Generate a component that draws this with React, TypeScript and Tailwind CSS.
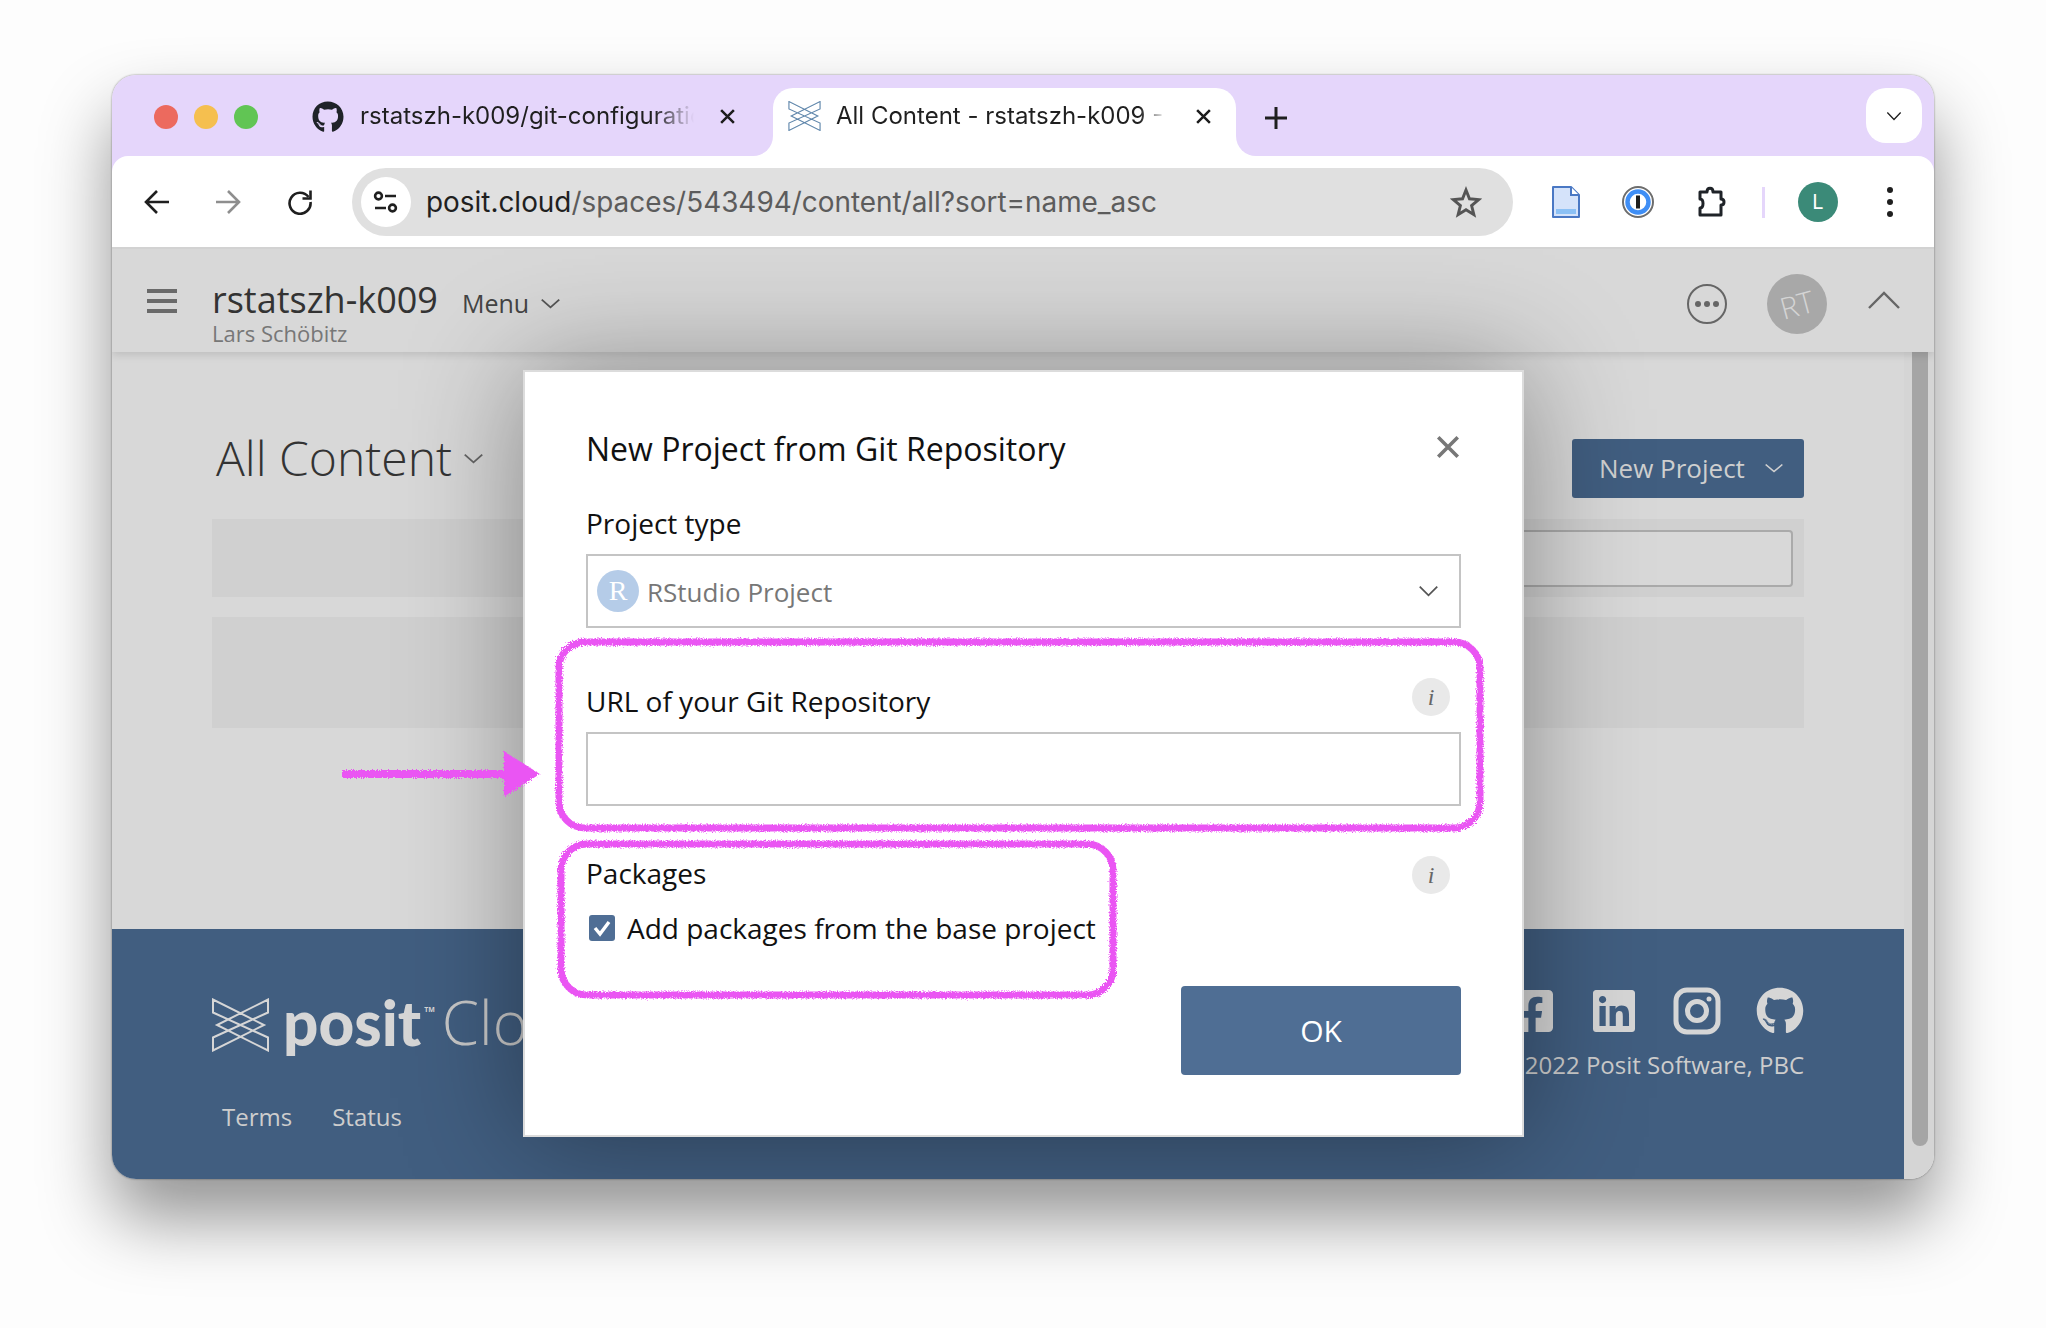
import React from "react";
import { FaGithub, FaFacebookSquare, FaLinkedin } from "react-icons/fa";

const PositMark = ({ className }: { className: string }) => (
  <svg viewBox="-1 -1 57 53" className={className} fill="none" stroke="currentColor" strokeWidth="2">
    <path d="M0 13V0L51 25.5L0 51V38L55 13V0L4 25.5L55 51V38L0 13Z" strokeLinejoin="miter" />
  </svg>
);

const Chevron = ({ className }: { className: string }) => (
  <svg viewBox="0 0 24 14" className={className} fill="none" stroke="currentColor" strokeWidth="2" preserveAspectRatio="none">
    <path d="M2 2L12 12L22 2" />
  </svg>
);

const Cross = ({ className, weight = "2.4" }: { className: string; weight?: string }) => (
  <svg viewBox="0 0 16 16" className={className} fill="none" stroke="currentColor" strokeWidth={weight}>
    <path d="M2 2L14 14M14 2L2 14" />
  </svg>
);

const Info = () => (
  <div className="flex h-[38px] w-[38px] items-center justify-center rounded-full bg-[#e9e9e9] text-[24px] italic leading-none text-[#666] [font-family:'Liberation_Serif',serif]">
    i
  </div>
);

const Annotations = () => (
  <svg className="pointer-events-none absolute left-0 top-0 z-20" width="2046" height="1328" fill="none">
    <defs>
      <filter id="rough" x="-5%" y="-5%" width="110%" height="110%">
        <feTurbulence type="fractalNoise" baseFrequency="0.8" numOctaves="2" seed="4" />
        <feDisplacementMap in="SourceGraphic" scale="5" />
      </filter>
    </defs>
    <g filter="url(#rough)" stroke="#ea55f3">
      <rect x="559" y="642" width="921" height="186" rx="26" strokeWidth="7" />
      <rect x="561" y="844" width="552" height="151" rx="26" strokeWidth="7" />
      <path d="M342 774H510" strokeWidth="8" />
      <path d="M505 753L538 774L505 795Z" fill="#ea55f3" strokeWidth="2" />
    </g>
  </svg>
);

const ChromeBar = () => (
  <div className="bg-[#e5d6fb]">
    <div className="flex h-[81px] items-end pr-[12px] [font-family:Inter,sans-serif]">
      <div className="flex h-[68px] w-[661px] items-start pt-[17px]">
        <div className="ml-[42px] flex h-[24px] gap-[16px]">
          <div className="h-[24px] w-[24px] rounded-full bg-[#ec6a5e]" />
          <div className="h-[24px] w-[24px] rounded-full bg-[#f5bf4f]" />
          <div className="h-[24px] w-[24px] rounded-full bg-[#61c554]" />
        </div>
        <FaGithub className="ml-[54px] mt-[-4px] h-[32px] w-[32px] shrink-0 text-[#1f2328]" />
        <div className="ml-[16px] mt-[-7px] w-[334px] overflow-hidden whitespace-nowrap text-[24px] leading-[36px] text-[#1f1f1f] [mask-image:linear-gradient(to_right,black_88%,transparent)]">
          rstatszh-k009/git-configuration
        </div>
        <Cross className="ml-[25px] mt-[3px] h-[17px] w-[17px] shrink-0 text-[#1f1f1f]" />
      </div>
      <div className="relative flex h-[68px] w-[463px] items-start rounded-t-[20px] bg-white pt-[10px]">
        <div className="absolute bottom-0 left-[-20px] h-[20px] w-[20px] bg-white">
          <div className="h-full w-full rounded-br-[20px] bg-[#e5d6fb]" />
        </div>
        <div className="absolute bottom-0 right-[-20px] h-[20px] w-[20px] bg-white">
          <div className="h-full w-full rounded-bl-[20px] bg-[#e5d6fb]" />
        </div>
        <PositMark className="ml-[15px] mt-[3px] h-[30px] w-[33px] shrink-0 text-[#5f86ab]" />
        <div className="ml-[15px] w-[330px] overflow-hidden whitespace-nowrap text-[24px] leading-[36px] text-[#1f1f1f] [mask-image:linear-gradient(to_right,black_92%,transparent)]">
          All Content - rstatszh-k009 - Posit Cloud
        </div>
        <Cross className="ml-[29px] mt-[10px] h-[17px] w-[17px] shrink-0 text-[#1f1f1f]" />
      </div>
      <div className="mb-[27px] ml-[29px] text-[0px]">
        <svg viewBox="0 0 22 22" className="h-[22px] w-[22px] text-[#1f1f1f]" fill="none" stroke="currentColor" strokeWidth="3">
          <path d="M11 0V22M0 11H22" />
        </svg>
      </div>
      <div className="mb-[13px] ml-auto flex h-[55px] w-[56px] items-center justify-center rounded-[20px] bg-white">
        <Chevron className="h-[10px] w-[16px] text-[#1f1f1f]" />
      </div>
    </div>
    <div className="flex h-[93px] items-center rounded-t-[16px] border-b-2 border-[#d2d2d2] bg-white pb-[1px] pt-[2px] [font-family:Inter,sans-serif]">
      <svg viewBox="0 0 26 26" className="ml-[32px] h-[26px] w-[26px] text-[#1f1f1f]" fill="none" stroke="currentColor" strokeWidth="2.6">
        <path d="M25 13H3M13 2L2 13L13 24" />
      </svg>
      <svg viewBox="0 0 26 26" className="ml-[45px] h-[26px] w-[26px] text-[#8e8e8e]" fill="none" stroke="currentColor" strokeWidth="2.6">
        <path d="M1 13H23M13 2L24 13L13 24" />
      </svg>
      <svg viewBox="0 0 26 26" className="ml-[46px] h-[26px] w-[26px] text-[#1f1f1f]" fill="none" stroke="currentColor" strokeWidth="2.6">
        <path d="M21.5 8A10.5 10.5 0 1 0 23.5 13" />
        <path d="M23.5 1.5V9.5H15.5" />
      </svg>
      <div className="ml-[39px] flex h-[68px] w-[1161px] items-center rounded-full bg-[#e0e0e0] pl-[9px] pr-[31px]">
        <div className="flex h-[50px] w-[50px] items-center justify-center rounded-full bg-white">
          <svg viewBox="0 0 26 22" className="h-[22px] w-[26px] text-[#1f1f1f]" fill="none" stroke="currentColor" strokeWidth="2.6">
            <circle cx="5.5" cy="5" r="3.4" />
            <path d="M12 5H23M2 17H13" />
            <circle cx="19.5" cy="17" r="3.4" />
          </svg>
        </div>
        <div className="ml-[15px] whitespace-nowrap text-[27.9px] leading-[36px] text-[#5c5c5c]">
          <span className="text-[#1f1f1f]">posit.cloud</span>/spaces/543494/content/all?sort=name_asc
        </div>
        <svg viewBox="0 0 24 24" className="ml-auto h-[32px] w-[32px] text-[#555]" fill="none" stroke="currentColor" strokeWidth="2.2" strokeLinejoin="miter">
          <path d="M12 3L14.6 9.6L21.5 10.2L16.2 14.7L17.9 21.5L12 17.8L6.1 21.5L7.8 14.7L2.5 10.2L9.4 9.6Z" />
        </svg>
      </div>
      <svg viewBox="0 0 28 32" className="ml-[39px] h-[32px] w-[28px]">
        <path d="M1 1H19L27 9V31H1Z" fill="#d5e3fa" stroke="#4a78c4" strokeWidth="2" strokeLinejoin="round" />
        <path d="M19 1V9H27" fill="#fff" stroke="#4a78c4" strokeWidth="2" />
        <rect x="4" y="23" width="20" height="5" fill="#8cc1f5" />
      </svg>
      <svg viewBox="0 0 32 32" className="ml-[42px] h-[32px] w-[32px]">
        <circle cx="16" cy="16" r="15" fill="#fff" stroke="#6d6d6d" strokeWidth="2" />
        <circle cx="16" cy="16" r="10.5" fill="#fff" stroke="#3f8ef5" strokeWidth="4.5" />
        <rect x="14" y="9.5" width="4" height="13" fill="#1f1f1f" />
      </svg>
      <svg viewBox="0 0 32 32" className="ml-[40px] h-[32px] w-[32px] text-[#1f2328]" fill="none" stroke="currentColor" strokeWidth="3" strokeLinejoin="round">
        <path d="M6 6H13C13 1 19 1 19 6H27V13C31 13 31 19 27 19V29H6V22C10 22 10 13 6 13Z" />
      </svg>
      <div className="ml-[36px] h-[31px] w-[3px] bg-[#e5d6fb]" />
      <div className="ml-[33px] flex h-[40px] w-[40px] items-center justify-center rounded-full bg-[#3b8a78] text-[20px] text-white">L</div>
      <div className="ml-[49px] flex flex-col gap-[6px]">
        <div className="h-[6px] w-[6px] rounded-full bg-[#1f1f1f]" />
        <div className="h-[6px] w-[6px] rounded-full bg-[#1f1f1f]" />
        <div className="h-[6px] w-[6px] rounded-full bg-[#1f1f1f]" />
      </div>
    </div>
  </div>
);

const AppHeader = () => (
  <div className="relative z-[1] flex h-[103px] shrink-0 items-start bg-[#d8d8d8] shadow-[0_3px_8px_rgba(0,0,0,0.12)]">
    <div className="ml-[35px] mt-[40px] flex w-[30px] flex-col gap-[6px]">
      <div className="h-[4px] bg-[#6a6a6a]" />
      <div className="h-[4px] bg-[#6a6a6a]" />
      <div className="h-[4px] bg-[#6a6a6a]" />
    </div>
    <div className="ml-[35px] flex flex-col">
      <div className="mt-[30px] flex h-[41px] items-baseline">
        <span className="text-[36px] leading-[41px] text-[#333]">rstatszh-k009</span>
        <span className="ml-[24px] text-[25px] leading-[41px] text-[#444]">Menu</span>
        <Chevron className="ml-[11px] mt-[7px] h-[11px] w-[21px] self-center text-[#555]" />
      </div>
      <div className="text-[22px] leading-[26px] text-[#777]">Lars Schöbitz</div>
    </div>
    <div className="ml-auto mr-[34px] mt-[25px] flex items-center">
      <div className="flex h-[40px] w-[40px] items-center justify-center gap-[3px] rounded-full border-2 border-[#666]">
        <div className="h-[6px] w-[6px] rounded-full bg-[#666]" />
        <div className="h-[6px] w-[6px] rounded-full bg-[#666]" />
        <div className="h-[6px] w-[6px] rounded-full bg-[#666]" />
      </div>
      <div className="ml-[40px] flex h-[60px] w-[60px] items-center justify-center rounded-full bg-[#a8a8a8]">
        <span className="-rotate-[15deg] text-[30px] font-light text-[#d4d4d4]">RT</span>
      </div>
      <svg viewBox="0 0 32 18" className="mb-[8px] ml-[41px] h-[18px] w-[32px] text-[#666]" fill="none" stroke="currentColor" strokeWidth="2.4">
        <path d="M1 17L16 2L31 17" />
      </svg>
    </div>
  </div>
);

const Content = () => (
  <div className="flex min-w-0 flex-1 flex-col">
    <div className="flex-1 bg-[#d8d8d8] px-[100px] pt-[76px]">
      <div className="flex h-[60px] items-center justify-between">
        <div className="flex items-center pl-[4px]">
          <span className="text-[48px] font-light leading-[60px] text-[#333]">All Content</span>
          <Chevron className="ml-[11px] h-[11px] w-[21px] text-[#666]" />
        </div>
        <div className="mt-[20px] flex h-[59px] w-[232px] items-center justify-between rounded-[3px] bg-[#415e80] pl-[27px] pr-[20px] text-[26px] text-[#cfcfcf]">
          New Project
          <Chevron className="h-[10px] w-[20px]" />
        </div>
      </div>
      <div className="mt-[31px] flex h-[78px] items-center justify-end bg-[#d0d0d0] pr-[11px]">
        <div className="h-[57px] w-[400px] rounded-[4px] border-2 border-[#aaa] bg-[#d8d8d8]" />
      </div>
      <div className="mt-[20px] h-[111px] bg-[#d0d0d0]" />
    </div>
    <div className="flex h-[250px] justify-between bg-[#415e80] px-[100px] pt-[58px]">
      <div className="text-[#d6d6d6]">
        <div className="flex items-center">
          <PositMark className="mt-[5px] h-[54px] w-[57px]" />
          <span className="ml-[14px] text-[62px] font-black leading-[70px] [font-family:Lato,sans-serif]">posit</span>
          <span className="ml-[3px] mt-[-24px] text-[7px] font-bold">TM</span>
          <span className="ml-[7px] text-[60px] font-light leading-[70px] text-[#c8c8c8]">Cloud</span>
        </div>
        <div className="ml-[10px] mt-[44px] flex gap-[40px] text-[24px] leading-[32px] text-[#cdcdcd]">
          <span>Terms</span>
          <span>Status</span>
        </div>
      </div>
      <div className="flex flex-col items-end text-[#d6d6d6]">
        <div className="flex gap-[36px]">
          <FaFacebookSquare className="h-[48px] w-[46px]" />
          <FaLinkedin className="h-[48px] w-[46px]" />
          <svg viewBox="0 0 48 48" className="mr-[-1px] h-[48px] w-[48px]" fill="none" stroke="currentColor" strokeWidth="5">
            <rect x="3" y="3" width="42" height="42" rx="11" />
            <circle cx="24" cy="24" r="9.5" />
            <circle cx="36" cy="12" r="2.5" fill="currentColor" stroke="none" />
          </svg>
          <FaGithub className="h-[48px] w-[48px]" />
        </div>
        <div className="mt-[14px] text-[24px] leading-[32px] text-[#cdcdcd]">© 2022 Posit Software, PBC</div>
      </div>
    </div>
  </div>
);

const Modal = () => (
  <div className="absolute left-[411px] top-[121px] z-10 flex h-[767px] w-[1001px] flex-col border-2 border-[#dcdcdc] bg-white pl-[61px] pr-[61px] pt-[52px] text-[#111] shadow-[0_0_110px_rgba(0,0,0,0.38)]">
    <div className="flex h-[50px] items-center justify-between">
      <span className="text-[32px] leading-[50px]">New Project from Git Repository</span>
      <Cross weight="2.2" className="mt-[-5px] h-[26px] w-[26px] text-[#777]" />
    </div>
    <div className="mt-[30px] text-[28px] leading-[38px]">Project type</div>
    <div className="mt-[12px] flex h-[74px] items-center border-2 border-[#c4c4c4] pl-[9px] pr-[20px]">
      <div className="flex h-[42px] w-[42px] items-center justify-center rounded-full bg-[#b5cce8] text-[28px] leading-none text-white [font-family:'Liberation_Serif',serif]">R</div>
      <span className="ml-[8px] mt-[2px] text-[26px] text-[#777]">RStudio Project</span>
      <Chevron className="ml-auto h-[12px] w-[21px] text-[#555]" />
    </div>
    <div className="mt-[50px] flex h-[38px] items-center justify-between pr-[11px]">
      <span className="mt-[8px] text-[28px] leading-[38px]">URL of your Git Repository</span>
      <Info />
    </div>
    <div className="mt-[16px] h-[74px] border-2 border-[#c4c4c4]" />
    <div className="mt-[50px] flex h-[38px] items-center justify-between pr-[11px]">
      <span className="mt-[-4px] text-[28px] leading-[38px]">Packages</span>
      <Info />
    </div>
    <div className="mt-[15px] flex items-center pl-[3px]">
      <div className="flex h-[26px] w-[26px] items-center justify-center rounded-[3px] bg-[#4f6e95]">
        <svg viewBox="0 0 20 20" className="h-[20px] w-[20px]" fill="none" stroke="#fff" strokeWidth="3.4">
          <path d="M3 10L8 16L17 4" />
        </svg>
      </div>
      <span className="ml-[12px] whitespace-nowrap text-[28px] leading-[38px]">Add packages from the base project</span>
    </div>
    <div className="mt-[39px] flex justify-end">
      <div className="flex h-[89px] w-[280px] items-center justify-center rounded-[4px] bg-[#4f6e94] text-[30px] text-white">OK</div>
    </div>
  </div>
);

export default function App() {
  return (
    <div className="relative h-[1328px] w-[2046px] overflow-hidden bg-[#fdfdfd] pl-[112px] pt-[75px] [font-family:'Open_Sans',sans-serif]">
      <div className="flex h-[1104px] w-[1822px] flex-col overflow-hidden rounded-[24px] shadow-[0_0_2px_rgba(0,0,0,0.5),0_40px_70px_rgba(0,0,0,0.42)]">
        <ChromeBar />
        <div className="relative flex min-h-0 flex-1 flex-col overflow-hidden">
          <AppHeader />
          <div className="flex min-h-0 flex-1">
            <Content />
            <div className="flex w-[30px] shrink-0 justify-center bg-[#d5d5d5]">
              <div className="mb-[33px] ml-[2px] w-[16px] rounded-b-full bg-[#a5a5a5]" />
            </div>
          </div>
          <Modal />
        </div>
      </div>
      <Annotations />
    </div>
  );
}
